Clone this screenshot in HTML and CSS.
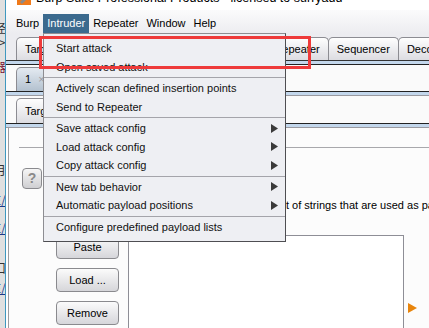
FILE: index.html
```html
<!DOCTYPE html>
<html lang="en">
<head>
    <meta charset="UTF-8">
    <title>Burp Suite - Intruder menu</title>
    <link rel="stylesheet" href="styles.css">
</head>
<body>
    <div class="screen">
        <div class="behind">
            <div class="ch ch-1">径</div>
            <div class="ch ch-2">\&gt;</div>
            <div class="ch ch-3">器</div>
            <div class="ch ch-4">月</div>
            <div class="ch ch-5">E/</div>
            <div class="ch ch-6">E/</div>
            <div class="ch ch-7">口</div>
            <div class="ch ch-8">E/</div>
        </div>
        <div class="edge"></div>

        <div class="window">
            <div class="titlebar">
                <svg class="logo" width="14" height="14" viewBox="0 0 14 14">
                    <rect x="0" y="0" width="14" height="14" fill="#f07a1a"/>
                    <path d="M3 11 L11 3 L13 5 L5 13 Z" fill="#8a8a8a"/>
                </svg>
                <div class="title">Burp Suite Professional Products - licensed to surryadd</div>
            </div>

            <div class="menubar">
                <span>Burp</span>
                <span class="open">Intruder</span>
                <span>Repeater</span>
                <span>Window</span>
                <span>Help</span>
            </div>

            <div class="tabstrip">
                <div class="tab">Target</div>
                <div class="tab narrow">Proxy</div>
                <div class="tab">Spider</div>
                <div class="tab">Scanner</div>
                <div class="tab">Intruder</div>
                <div class="tab">Repeater</div>
                <div class="tab">Sequencer</div>
                <div class="tab">Decoder</div>
            </div>
            <div class="band"></div>

            <div class="subrow">
                <div class="tab tall sel">1 <span class="close">×</span></div>
                <div class="tab tall">...</div>
            </div>
            <div class="band band-low"></div>

            <div class="subrow">
                <div class="tab taller">Target</div>
                <div class="tab taller">Positions</div>
                <div class="tab taller sel">Payloads</div>
                <div class="tab taller">Options</div>
            </div>
            <div class="band band-low"></div>

            <div class="content">
                <div class="rule"></div>
                <div class="help">?</div>
                <p class="desc">This payload type lets you configure a simple list of strings that are used as payloads.</p>
                <div class="payload-row">
                    <div class="buttons">
                        <button>Paste</button>
                        <button>Load ...</button>
                        <button>Remove</button>
                    </div>
                    <div class="listbox"></div>
                    <svg class="arrow" width="9" height="10" viewBox="0 0 9 10">
                        <path d="M0 0 L9 5 L0 10 Z" fill="#e8850c"/>
                    </svg>
                </div>
            </div>
        </div>

        <div class="dropdown">
            <div class="item">Start attack</div>
            <div class="item">Open saved attack</div>
            <div class="sep"></div>
            <div class="item">Actively scan defined insertion points</div>
            <div class="item">Send to Repeater</div>
            <div class="sep"></div>
            <div class="item sub">Save attack config <svg width="7" height="9" viewBox="0 0 7 9"><path d="M0 0 L7 4.5 L0 9 Z" fill="#3a3a3a"/></svg></div>
            <div class="item sub">Load attack config <svg width="7" height="9" viewBox="0 0 7 9"><path d="M0 0 L7 4.5 L0 9 Z" fill="#3a3a3a"/></svg></div>
            <div class="item sub">Copy attack config <svg width="7" height="9" viewBox="0 0 7 9"><path d="M0 0 L7 4.5 L0 9 Z" fill="#3a3a3a"/></svg></div>
            <div class="sep"></div>
            <div class="item sub">New tab behavior <svg width="7" height="9" viewBox="0 0 7 9"><path d="M0 0 L7 4.5 L0 9 Z" fill="#3a3a3a"/></svg></div>
            <div class="item sub">Automatic payload positions <svg width="7" height="9" viewBox="0 0 7 9"><path d="M0 0 L7 4.5 L0 9 Z" fill="#3a3a3a"/></svg></div>
            <div class="sep"></div>
            <div class="item">Configure predefined payload lists</div>
        </div>

        <div class="highlight-box"></div>
    </div>
</body>
</html>
```

FILE: styles.css
```css
body {
    margin: 0;
    width: 429px;
    height: 328px;
    overflow: hidden;
    font-family: "Liberation Sans", Arial, sans-serif;
    font-size: 11px;
    color: #111;
    background: #fff;
}
.screen {
    position: relative;
    display: flex;
    height: 328px;
    overflow: hidden;
}

/* sliver of the window behind */
.behind {
    width: 5px;
    flex-shrink: 0;
    background: #e0e0e0;
    overflow: hidden;
    font-family: "Noto Sans CJK SC", sans-serif;
    font-size: 12px;
    line-height: 14px;
    white-space: nowrap;
}
.ch { margin-left: -6px; color: #333; }
.ch-1 { margin-top: 21px; }
.ch-2 { margin-top: 0; }
.ch-3 { margin-top: 11px; color: #7a1030; }
.ch-4 { margin-top: 89px; }
.ch-5 { margin-top: 16px; color: #1a3a8a; text-decoration: underline; }
.ch-6 { margin-top: 14px; color: #1a3a8a; text-decoration: underline; }
.ch-7 { margin-top: 26px; }
.ch-8 { margin-top: 6px; color: #1a3a8a; text-decoration: underline; }
.edge {
    width: 1px;
    flex-shrink: 0;
    background: #3f98bf;
}

.window {
    flex: 1;
    min-width: 0;
    display: flex;
    flex-direction: column;
    background: #fff;
}
.window > * {
    flex-shrink: 0;
}
.titlebar {
    height: 10px;
    overflow: hidden;
    display: flex;
    gap: 5px;
    padding-left: 11px;
}
.logo { margin-top: -9px; flex-shrink: 0; }
.title {
    margin-top: -8px;
    font-size: 12.5px;
    line-height: 12px;
    white-space: nowrap;
    color: #000;
}

.menubar {
    height: 19px;
    display: flex;
    padding: 4px 0 1px 6px;
    background: linear-gradient(#fbfbfc, #ececf0);
}
.menubar span {
    padding: 0 4px;
    line-height: 19px;
    color: #000;
}
.menubar .open {
    background: #3b6a8e;
    color: #fff;
}

.tabstrip, .subrow {
    display: flex;
    padding: 3px 0 0 10px;
    background: #ececf0;
    white-space: nowrap;
}
.subrow {
    padding-top: 2px;
    background: #fafafa;
}
.tab {
    box-sizing: border-box;
    flex-shrink: 0;
    height: 23px;
    line-height: 22px;
    padding: 0 8px;
    margin-right: -1px;
    border: 1px solid #8c8c92;
    border-bottom: none;
    border-radius: 5px 5px 0 0;
    background: linear-gradient(#fefefe, #dcdce1);
    color: #000;
}
.tab.narrow { padding: 0 5.5px; }
.tab.tall { height: 24px; line-height: 23px; }
.tab.taller { height: 25px; line-height: 24px; }
.tab.sel {
    background: linear-gradient(#e4eaf1, #b3c1cf);
}
.close { color: #9a9aa0; margin-left: 4px; }

.band {
    height: 3px;
    background: #c3d7ec;
    border-top: 1px solid #333;
    border-bottom: 1px solid #222;
}
.band-low {
    border-top-color: #222;
    border-bottom-color: #9a9aa0;
}

.content {
    flex: 1 1 auto;
    min-height: 0;
    overflow: hidden;
    margin-left: 2px;
    border-left: 1px solid #9c9ca0;
    background: #fcfcfc;
}
.rule {
    margin: 19px 0 0 10px;
    border-top: 1px solid #a8a8ac;
}
.help {
    box-sizing: border-box;
    width: 20px;
    height: 21px;
    margin: 20px 0 0 13px;
    border: 1px solid #8a8a8e;
    border-radius: 4px;
    background: linear-gradient(#f6f6f6, #cfcfd2);
    color: #8a8a8a;
    font-weight: bold;
    font-size: 14px;
    line-height: 19px;
    text-align: center;
}
.desc {
    margin: 9px 0 0 44px;
    line-height: 14px;
    white-space: nowrap;
    color: #000;
}
.payload-row {
    display: flex;
    align-items: flex-start;
    margin: 23px 0 0 47px;
}
.buttons {
    display: flex;
    flex-direction: column;
    gap: 9px;
}
.buttons button {
    width: 63px;
    height: 24px;
    padding: 0;
    border: 1px solid #8a8a8e;
    border-radius: 4px;
    background: linear-gradient(#fbfbfb, #d6d6da);
    font-family: "Liberation Sans", Arial, sans-serif;
    font-size: 11px;
    color: #000;
}
.listbox {
    flex-shrink: 0;
    width: 274px;
    height: 120px;
    margin-left: 9px;
    border: 1px solid #8e8e96;
    border-bottom: none;
    background: #fff;
}
.arrow {
    flex-shrink: 0;
    margin: 68px 0 0 4px;
}

/* open Intruder menu */
.dropdown {
    position: absolute;
    left: 43px;
    top: 33px;
    width: 241px;
    padding: 5px 0;
    border: 1px solid #8d8d92;
    border-right-color: #4e4e52;
    border-bottom-color: #4e4e52;
    background: #eeeff3;
}
.item {
    display: flex;
    justify-content: space-between;
    align-items: center;
    height: 18.5px;
    line-height: 18.5px;
    padding: 0 7px 0 12px;
    color: #111;
    white-space: nowrap;
}
.sep {
    height: 1px;
    margin: 1px 0;
    background: #a4a4aa;
}

.highlight-box {
    position: absolute;
    left: 39px;
    top: 36px;
    width: 272px;
    height: 33px;
    box-sizing: border-box;
    border: 3px solid #ee3a3a;
}
```
